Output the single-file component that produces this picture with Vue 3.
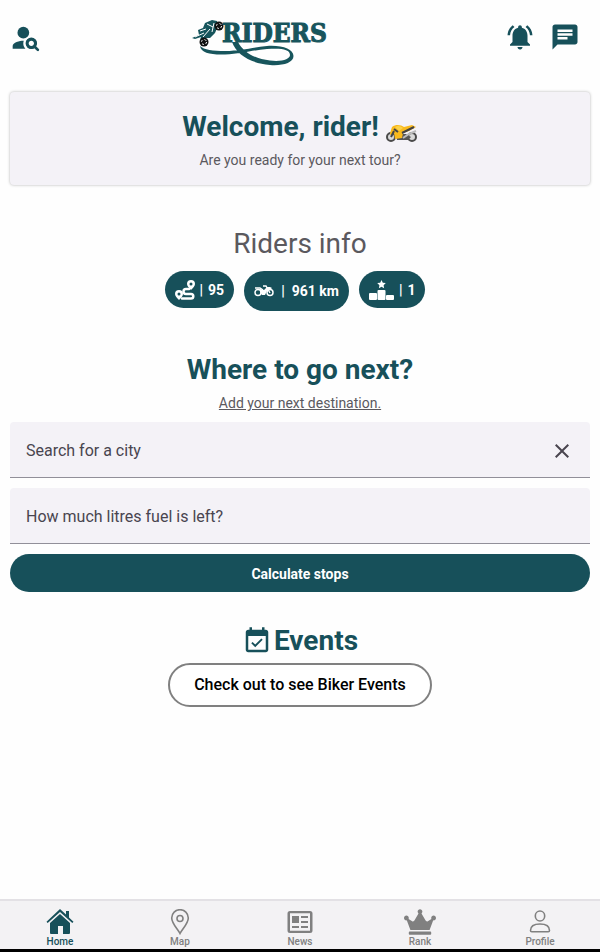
<script setup>
import { ref } from 'vue'

const city = ref('')
const litres = ref('')
const active = ref('Home')
const tabs = ['Home', 'Map', 'News', 'Rank', 'Profile']
</script>

<template>
  <div class="page">
    <header class="top">
      <button class="icon-btn" aria-label="Find riders">
        <svg width="32" height="32" viewBox="0 0 24 24" fill="currentColor">
          <circle cx="10" cy="8" r="4.4" />
          <path d="M10.35 14.01C7.62 13.91 2 15.27 2 18v2h9.54c-2.47-2.76-1.23-5.89-1.19-5.99zM19.43 18.02c.36-.59.57-1.28.57-2.02 0-2.21-1.79-4-4-4s-4 1.79-4 4 1.79 4 4 4c.74 0 1.43-.22 2.02-.57L20.59 22 22 20.59l-2.57-2.57zM16 18c-1.1 0-2-.9-2-2s.9-2 2-2 2 .9 2 2-.9 2-2 2z" />
          <path fill="none" stroke="currentColor" d="M18.500 18.500l3 3M16 12.200a3.800 3.800 0 1 0 0 7.600a3.800 3.800 0 1 0 0-7.600" />
        </svg>
      </button>

      <svg class="logo" width="136" height="48" viewBox="0 0 136 48">
        <path fill="#17555c" d="M9 28C13 32 22 33 34 33C51 32.500 61 29.500 76 28C91 27 102.500 31 102.500 38C102.500 45 91 48 79 47C60 45.500 46 37 41 24L47 24C52 34 64 41 79 42.500C91 44 99 41 99 37C99 31 90 30 76 31C62 32 51 36 34 36.500C20 37 10 35 9 28Z" />
        <path fill="#17555c" d="M1 20L8 17L7 12L12 10L14 5L21 2L26 3L27 8L24 15L19 20L13 20L9 22L10 19L4 21Z" />
        <path stroke="#fff" stroke-width="1" fill="none" d="M4 19l9-4M9 13l6-2M12 19l7-8M16 6l6 3M23 5l-2 9" />
        <circle cx="28" cy="8" r="4.500" fill="#111" />
        <circle cx="28" cy="8" r="2.500" fill="none" stroke="#fff" stroke-width="1" stroke-dasharray="2 2" />
        <circle cx="13" cy="24" r="4.500" fill="#111" />
        <circle cx="13" cy="24" r="2.500" fill="none" stroke="#fff" stroke-width="1" stroke-dasharray="2 2" />
        <text class="logo-text" x="31" y="24">RIDERS</text>
      </svg>

      <div class="tools">
        <button class="icon-btn" aria-label="Notifications">
          <svg width="30" height="30" viewBox="0 0 24 24" fill="currentColor">
            <path d="M7.58 4.08L6.15 2.65C3.75 4.48 2.17 7.3 2.03 10.5h2c.15-2.65 1.51-4.97 3.55-6.42zm12.39 6.42h2c-.15-3.2-1.73-6.02-4.12-7.85l-1.42 1.43c2.02 1.45 3.39 3.77 3.54 6.42zM18 11c0-3.07-1.64-5.64-4.5-6.32V4c0-.83-.67-1.5-1.5-1.5s-1.5.67-1.5 1.5v.68C7.63 5.36 6 7.92 6 11v5l-2 2v1h16v-1l-2-2v-5zm-6 11c.14 0 .27-.01.4-.04.65-.14 1.18-.58 1.44-1.18.1-.24.15-.5.15-.78h-4c.01 1.1.9 2 2.01 2z" />
          </svg>
        </button>
        <button class="icon-btn" aria-label="Messages">
          <svg width="30" height="30" viewBox="0 0 24 24" fill="currentColor">
            <path d="M20 2H4c-1.1 0-1.990.9-1.990 2L2 22l4-4h14c1.1 0 2-.9 2-2V4c0-1.1-.9-2-2-2zM6 9h12v2H6V9zm8 5H6v-2h8v2zm4-6H6V6h12v2z" />
          </svg>
        </button>
      </div>
    </header>

    <main class="content">
      <!-- welcome card -->
      <section class="card">
        <h1 class="title">
          Welcome, rider!
          <svg class="bike" width="32" height="18" viewBox="0 0 32 18">
            <g fill="#d9d9d9" stroke="#4a4a4a" stroke-width="2">
              <circle cx="5" cy="13" r="4" />
              <circle cx="26" cy="13" r="4" />
            </g>
            <path fill="#555" d="M10 10h10l5 3-3 3H11z" />
            <path fill="#f9b91c" d="M4 9L6 3C10 0 15 1 18 3L26 1L30 3L23 7L17 9L16 14L9 15L8 9L4 11Z" />
            <path fill="#fbd34a" d="M9 3c3-2 6-1 8 1l-4 3z" />
            <path fill="none" stroke="#444" stroke-width="2" d="M8 5l4 3M16 9l12-6M5 13l3-6" />
            <path fill="none" stroke="#bbb" stroke-width="2" d="M17 14l6-4 7-3" />
          </svg>
        </h1>
        <p class="sub">Are you ready for your next tour?</p>
      </section>

      <!-- stats -->
      <section class="info">
        <h2 class="title title-plain">Riders info</h2>
        <div class="chips">
          <button class="chip" aria-label="Routes: 95">
            <svg width="20" height="20" viewBox="0 0 20 20">
              <path fill="#fff" fill-rule="evenodd" d="M16 0a4 4 0 0 1 4 4c0 2-2 4-4 6c-2-2-4-4-4-6a4 4 0 0 1 4-4zM16 2.500a1.500 1.500 0 1 0 0 3a1.500 1.500 0 0 0 0-3zM4 10a4 4 0 0 1 4 4c0 2-2 4-4 6c-2-2-4-4-4-6a4 4 0 0 1 4-4zM4 12.500a1.500 1.500 0 1 0 0 3a1.500 1.500 0 0 0 0-3z" />
              <path fill="none" stroke="#fff" stroke-width="2.500" stroke-linecap="round" d="M14 9h-3a2.500 2.500 0 0 0 0 5h5a2.300 2.300 0 0 1 0 4.600H7" />
            </svg>
            <span>|</span>
            <span>95</span>
          </button>
          <button class="chip chip-tall" aria-label="Distance: 961 km">
            <svg width="20" height="12" viewBox="0 0 20 12">
              <g fill="none" stroke="#fff" stroke-width="1.500">
                <circle cx="4" cy="7.500" r="3" />
                <circle cx="16" cy="7.500" r="3" />
                <path d="M16 8L12 1H9M1 3h5l3 2" />
              </g>
              <path fill="#fff" d="M6 4l4 1 3-3 3 0 2 1-2 2-3 1-2 4H8L6 7z" />
            </svg>
            <span>|</span>
            <span>961 km</span>
          </button>
          <button class="chip" aria-label="Rank: 1">
            <svg width="25" height="20" viewBox="0 0 25 20" fill="#fff">
              <path d="M12.500 0l1.300 2.700 3 .4-2.200 2.100.5 3-2.600-1.400-2.600 1.400.5-3-2.200-2.100 3-.4z" />
              <rect x="0" y="13" width="8" height="7" rx="1" />
              <rect x="8.500" y="10" width="8" height="10" rx="1" />
              <rect x="17" y="15" width="8" height="5" rx="1" />
            </svg>
            <span>|</span>
            <span>1</span>
          </button>
        </div>
      </section>

      <!-- route planner -->
      <form class="planner" @submit.prevent>
        <h2 class="title">Where to go next?</h2>
        <a class="sub sub-link" href="#">Add your next destination.</a>
        <div class="field">
          <label v-if="!city" for="city">Search for a city</label>
          <input id="city" v-model="city" type="text" autocomplete="off">
          <button class="clear" type="button" aria-label="Clear" @click="city = ''">
            <svg width="24" height="24" viewBox="0 0 24 24" fill="currentColor">
              <path d="M19 6.410L17.590 5 12 10.590 6.410 5 5 6.410 10.590 12 5 17.590 6.410 19 12 13.410 17.590 19 19 17.590 13.410 12z" />
            </svg>
          </button>
        </div>
        <div class="field">
          <label v-if="!litres" for="litres">How much litres fuel is left?</label>
          <input id="litres" v-model="litres" type="text" inputmode="decimal">
        </div>
        <button class="submit" type="submit">Calculate stops</button>
      </form>

      <!-- events -->
      <section class="events">
        <h2 class="title title-icon">
          <svg width="30" height="30" viewBox="0 0 24 24" fill="currentColor">
            <path d="M16.530 11.060L15.470 10l-4.880 4.880-2.120-2.120-1.060 1.060L10.590 17l5.940-5.940zM19 3h-1V1h-2v2H8V1H6v2H5c-1.110 0-1.990.9-1.990 2L3 19c0 1.100.890 2 2 2h14c1.100 0 2-.9 2-2V5c0-1.100-.9-2-2-2zm0 16H5V8h14v11z" />
          </svg>
          Events
        </h2>
        <button class="outline">Check out to see Biker Events</button>
      </section>
    </main>

    <nav class="tabs">
      <button
        v-for="tab in tabs"
        :key="tab"
        class="tab"
        :class="{ 'tab-active': active === tab }"
        @click="active = tab"
      >
        <svg v-if="tab === 'Home'" width="28" height="26" viewBox="0 0 28 26" fill="currentColor">
          <path d="M14 0l6 5.500V2h3v6.500l4.500 4.200-1.200 1.300L14 3 1.700 14 .5 12.700z" />
          <path d="M14 5l10 9v10a1 1 0 0 1-1 1h-6v-8h-5v8H5a1 1 0 0 1-1-1V14z" />
        </svg>
        <svg v-else-if="tab === 'Map'" width="20" height="26" viewBox="0 0 20 26" fill="none" stroke="currentColor" stroke-width="1.600">
          <path d="M10 24.500C8 20.500 1.700 14.500 1.700 9a8.300 8.300 0 0 1 16.600 0c0 5.500-6.300 11.500-8.300 15.500z" />
          <circle cx="10" cy="9.500" r="3" />
        </svg>
        <svg v-else-if="tab === 'News'" width="26" height="26" viewBox="0 0 26 26" fill="currentColor">
          <path fill-rule="evenodd" d="M3 2h20a2.500 2.500 0 0 1 2.500 2.500v17A2.500 2.500 0 0 1 23 24H3A2.500 2.500 0 0 1 .5 21.500v-17A2.500 2.500 0 0 1 3 2zM3 4.300v17.400h20V4.300z" />
          <path d="M5 7h7v7H5zM14 7h7v2h-7zM14 12h7v2h-7zM5 17h7v2H5zM14 17h7v2h-7z" />
        </svg>
        <svg v-else-if="tab === 'Rank'" width="32" height="26" viewBox="0 0 640 512" fill="currentColor">
          <path d="M528 448H112c-8.800 0-16 7.200-16 16v32c0 8.800 7.200 16 16 16h416c8.800 0 16-7.200 16-16v-32c0-8.800-7.200-16-16-16zm64-320c-26.500 0-48 21.500-48 48 0 7.100 1.600 13.700 4.400 19.800L476 239.200c-15.400 9.200-35.300 4-44.200-11.600L350.300 85C361 76.200 368 63 368 48c0-26.500-21.500-48-48-48s-48 21.500-48 48c0 15 7 28.200 17.700 37l-81.500 142.600c-8.900 15.600-28.900 20.800-44.200 11.600l-72.300-43.400c2.700-6 4.400-12.700 4.400-19.800 0-26.500-21.500-48-48-48S0 149.500 0 176s21.500 48 48 48c2.600 0 5.200-.4 7.700-.8L128 416h384l72.300-192.800c2.500.4 5.100.8 7.700.8 26.500 0 48-21.500 48-48s-21.500-48-48-48z" />
        </svg>
        <svg v-else width="22" height="26" viewBox="0 0 22 26" fill="none" stroke="currentColor" stroke-width="1.600">
          <ellipse cx="11" cy="7" rx="4.700" ry="5" />
          <path d="M1.500 21.500c0-4.500 4-6.500 9.500-6.500s9.500 2 9.500 6.500c0 .8-.4 1.300-1.300 1.300H2.800c-.9 0-1.300-.5-1.300-1.300z" />
        </svg>
        <span>{{ tab }}</span>
      </button>
    </nav>
  </div>
</template>

<style>
body {
  margin: 0;
  background: #fefefe;
}
</style>

<style scoped>
.page {
  min-height: 100vh;
  display: flex;
  flex-direction: column;
  box-sizing: border-box;
  border-bottom: 3px solid #000;
  font-family: Roboto, "Liberation Sans", sans-serif;
  color: #5b595e;
}

button {
  padding: 0;
  border: 0;
  background: none;
  font-family: inherit;
  cursor: pointer;
}

svg {
  display: block;
  flex: none;
}

/* ── Header ── */
.top {
  display: grid;
  grid-template-columns: 5fr auto 7fr;
  align-items: start;
  padding: 18px 20px 0 10px;
}

.icon-btn {
  display: block;
  margin-top: 4px;
  color: #17505a;
  justify-self: start;
}

.logo-text {
  font-family: "DejaVu Serif Condensed", "DejaVu Serif", serif;
  font-size: 26px;
  font-weight: 700;
  fill: #17555c;
  stroke: #17555c;
  stroke-width: 1px;
}

.tools {
  display: flex;
  justify-content: flex-end;
  gap: 15px;
}

/* ── Content ── */
.content {
  flex: 1;
  padding: 26px 10px 0;
}

.card {
  padding: 17px 16px 15px;
  border-radius: 4px;
  background: #f4f2f7;
  box-shadow: 0 0 3px rgba(0, 0, 0, 0.3);
  text-align: center;
}

.title {
  margin: 0;
  font-size: 28px;
  line-height: 36px;
  font-weight: 700;
  color: #17505a;
  text-align: center;
}

.title-plain {
  font-weight: 400;
  color: #5b595e;
}

.title-icon {
  display: flex;
  align-items: center;
  gap: 2px;
}

.bike {
  display: inline-block;
  vertical-align: -6px;
}

.sub {
  margin: 5px 0 0;
  font-size: 14px;
  line-height: 20px;
  color: #5b595e;
}

/* ── Stats ── */
.info {
  margin-top: 41px;
}

.chips {
  display: flex;
  justify-content: center;
  align-items: flex-start;
  margin-top: 9px;
}

.chip {
  display: flex;
  align-items: center;
  gap: 5px;
  height: 37px;
  margin-right: 10px;
  padding: 0 10px;
  border-radius: 20px;
  background: #17505a;
  color: #fff;
  font-size: 14px;
  line-height: 20px;
  font-weight: 700;
}

.chip-tall {
  gap: 7px;
  height: 40px;
}

/* ── Planner ── */
.planner {
  display: flex;
  flex-direction: column;
  margin-top: 41px;
}

.sub-link {
  align-self: center;
  margin-bottom: 9px;
}

.field {
  display: grid;
  grid-template-columns: 1fr auto;
  align-items: center;
  height: 56px;
  box-sizing: border-box;
  margin-bottom: 10px;
  padding: 2px 16px 0;
  border-bottom: 1px solid #918f99;
  border-radius: 4px 4px 0 0;
  background: #f4f2f7;
}

.field label,
.field input {
  grid-area: 1 / 1;
  font-size: 16px;
  line-height: 24px;
  color: #49454f;
}

.field label {
  pointer-events: none;
}

.field input {
  min-width: 0;
  padding: 0;
  border: 0;
  outline: 0;
  background: none;
  font-family: inherit;
}

.clear {
  color: #49454f;
}

.submit {
  height: 38px;
  padding-top: 2px;
  border-radius: 20px;
  background: #17505a;
  color: #fff;
  font-size: 14px;
  line-height: 20px;
  font-weight: 700;
}

/* ── Events ── */
.events {
  display: flex;
  flex-direction: column;
  align-items: center;
  gap: 4px;
  margin-top: 31px;
}

.outline {
  height: 44px;
  padding: 0 24px;
  border: 2px solid #808080;
  border-radius: 22px;
  background: #fff;
  color: #000;
  font-size: 16px;
  line-height: 24px;
  font-weight: 500;
}

/* ── Tabs ── */
.tabs {
  display: grid;
  grid-template-columns: repeat(5, 1fr);
  border-top: 2px solid #e3e1e5;
  background: #f3f2f4;
}

.tab {
  display: flex;
  flex-direction: column;
  align-items: center;
  gap: 1px;
  padding: 8px 0 1px;
  color: #808080;
  font-size: 10px;
  line-height: 12px;
  font-weight: 500;
}

.tab-active {
  color: #17505a;
}
</style>
